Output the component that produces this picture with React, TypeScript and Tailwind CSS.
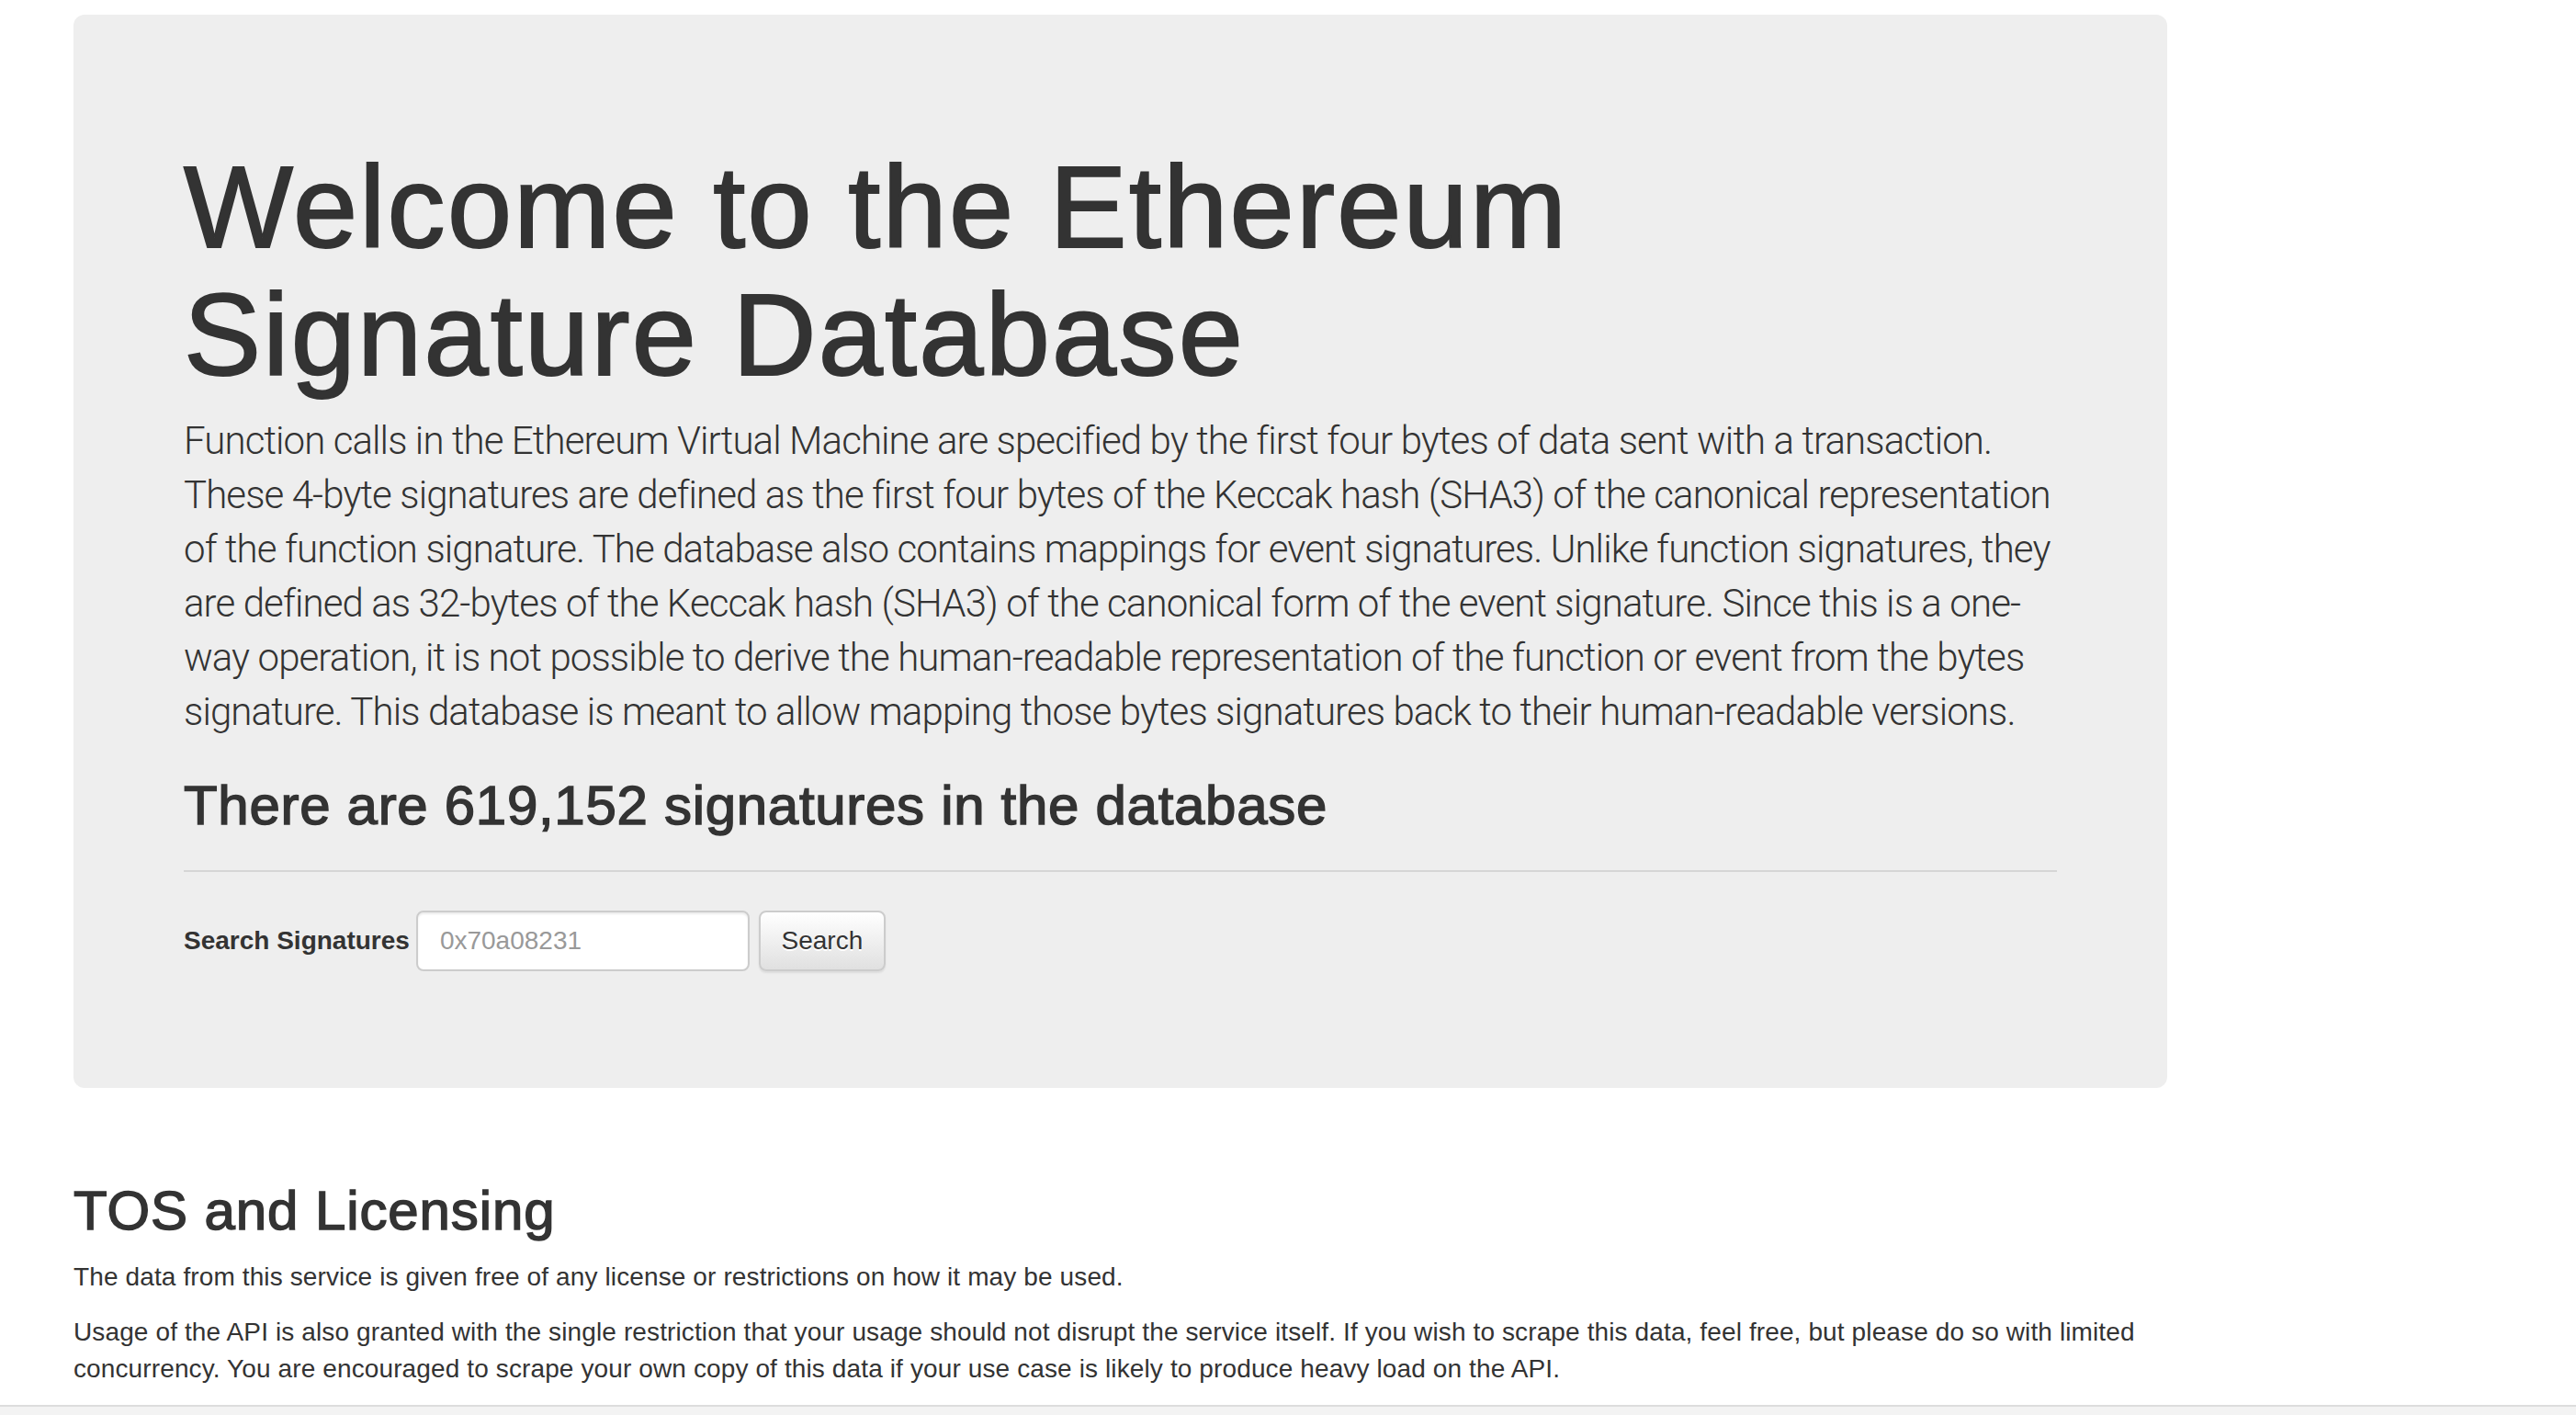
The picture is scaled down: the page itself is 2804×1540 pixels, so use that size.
import React from "react";

const lead = [
  "Function calls in the Ethereum Virtual Machine are specified by the first four bytes of data sent with a transaction.",
  "These 4-byte signatures are defined as the first four bytes of the Keccak hash (SHA3) of the canonical representation",
  "of the function signature. The database also contains mappings for event signatures. Unlike function signatures, they",
  "are defined as 32-bytes of the Keccak hash (SHA3) of the canonical form of the event signature. Since this is a one-",
  "way operation, it is not possible to derive the human-readable representation of the function or event from the bytes",
  "signature. This database is meant to allow mapping those bytes signatures back to their human-readable versions.",
];

export default function App() {
  return (
    <div className="min-h-[1540px] bg-white text-[#333333] font-['Liberation_Sans',Arial,sans-serif] flex flex-col">
      <div className="pl-[80px] pt-[16px] w-[2359px]">
        <div className="bg-[#eeeeee] rounded-[12px] px-[120px] pt-[96px] pb-[127px]">
          <h1 className="mt-[44px] mb-[16px] text-[126px] leading-[139px] font-normal tracking-[2.3px] [-webkit-text-stroke:2px_#333333]">
            Welcome to the Ethereum
            <br />
            Signature Database
          </h1>
          <p className="mb-[40px] text-[42px] leading-[59px] font-light tracking-[-0.9px] font-['Roboto','Liberation_Sans',sans-serif]">
            {lead.map((l, i) => (
              <span key={i} className="block whitespace-nowrap">
                {l}
              </span>
            ))}
          </p>
          <h2 className="text-[60px] leading-[66px] font-normal tracking-[0.7px] [-webkit-text-stroke:1.5px_#333333]">
            There are 619,152 signatures in the database
          </h2>
          <hr className="mt-[37px] mb-[42px] border-0 border-t-2 border-[#d6d6d6]" />
          <form className="flex items-center" onSubmit={(e) => e.preventDefault()}>
            <label className="text-[28px] font-bold leading-[40px] mr-[7px]">Search Signatures</label>
            <input
              type="text"
              placeholder="0x70a08231"
              className="w-[363px] h-[66px] bg-white border-2 border-[#cccccc] rounded-[8px] px-[24px] text-[28px] text-[#555555] placeholder:text-[#999999] shadow-[inset_0_2px_2px_rgba(0,0,0,0.075)] outline-none"
            />
            <button
              type="submit"
              className="ml-[10px] w-[138px] h-[66px] border-2 border-[#cccccc] rounded-[8px] bg-linear-to-b from-white to-[#e0e0e0] text-[28px] text-[#333333] [text-shadow:0_2px_0_#ffffff] shadow-[0_2px_2px_rgba(0,0,0,0.075)]"
            >
              Search
            </button>
          </form>
        </div>
        <h2 className="mt-[101px] text-[60px] leading-[66px] font-normal tracking-[0.9px] [-webkit-text-stroke:1.5px_#333333]">
          TOS and Licensing
        </h2>
        <p className="mt-[19px] text-[28px] leading-[40px] tracking-[0.12px]">
          The data from this service is given free of any license or restrictions on how it may be used.
        </p>
        <p className="mt-[20px] text-[28px] leading-[40px] tracking-[0.12px]">
          <span className="block whitespace-nowrap">
            Usage of the API is also granted with the single restriction that your usage should not disrupt the service itself. If you wish to scrape this data, feel free, but please do so with limited
          </span>
          <span className="block whitespace-nowrap">
            concurrency. You are encouraged to scrape your own copy of this data if your use case is likely to produce heavy load on the API.
          </span>
        </p>
      </div>
      <div className="mt-[19px] flex-1 border-t-2 border-[#dddddd] bg-[#f3f3f3]" />
    </div>
  );
}
